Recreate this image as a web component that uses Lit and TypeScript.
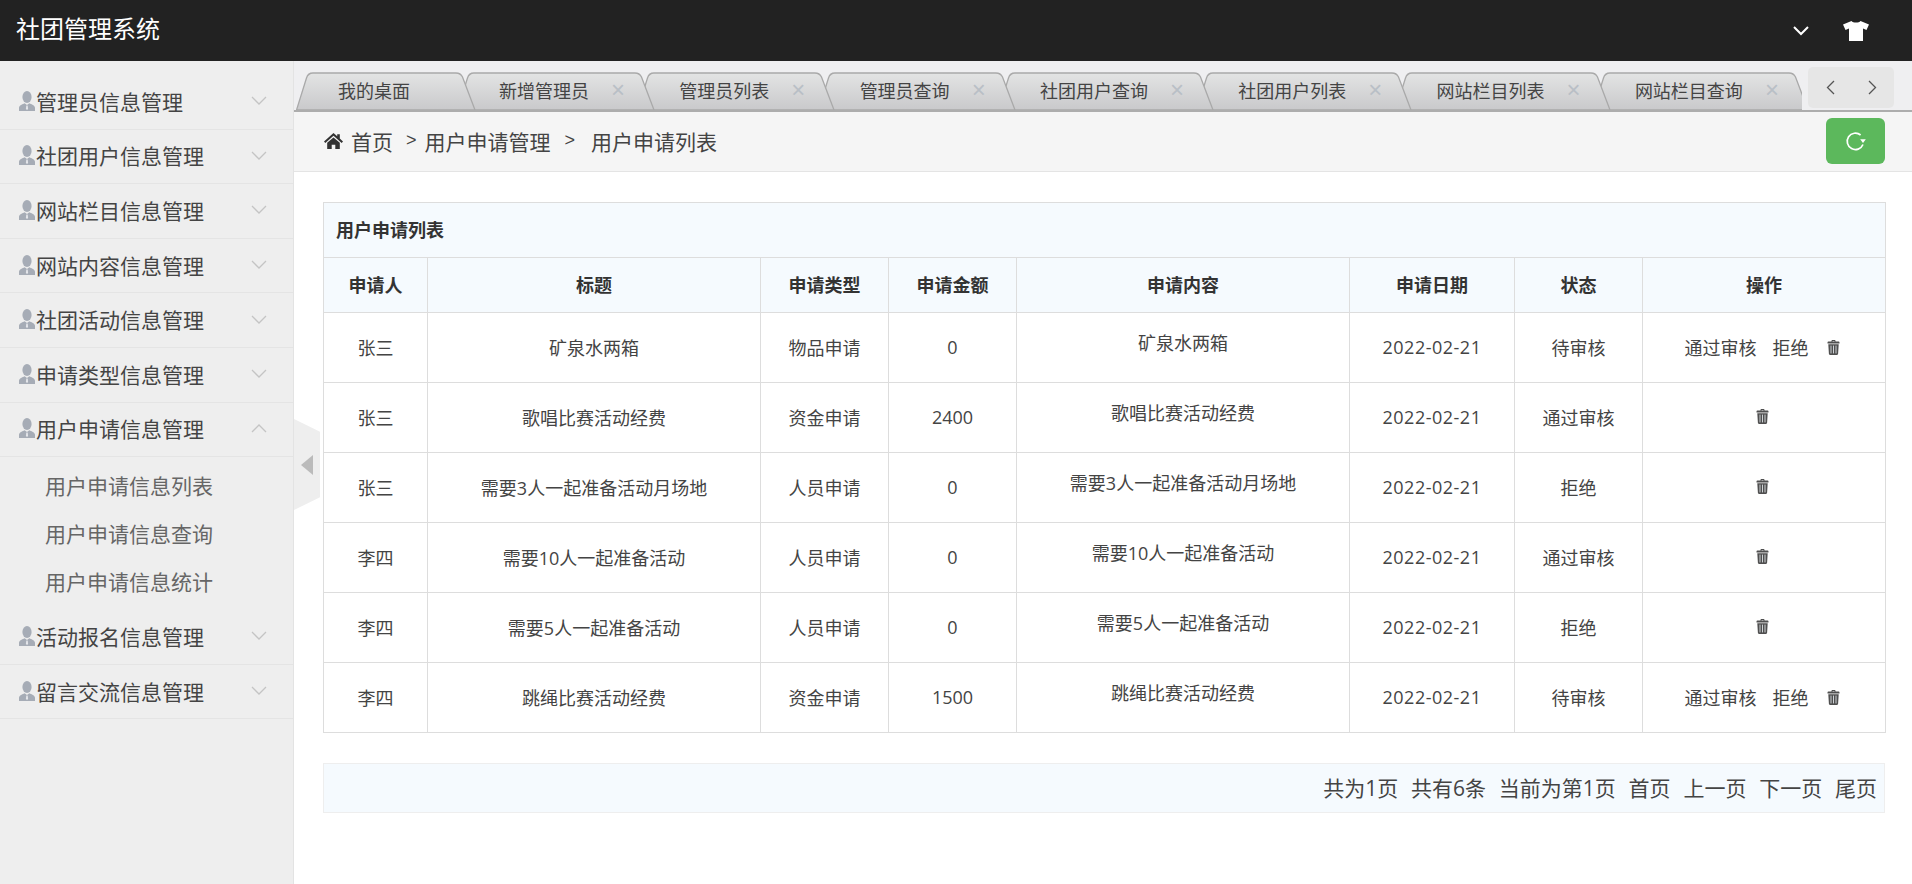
import { LitElement, html, css, svg } from "lit";
import { customElement } from "lit/decorators.js";

const userIcon = html`<svg class="user" viewBox="0 0 16 20"><ellipse cx="8" cy="6" rx="4.6" ry="6" fill="#a6acb6"></ellipse><path d="M0 20v-3.2c0-2.6 3.6-3.6 5.6-4.6L8 14l2.4-1.8c2 1 5.6 2 5.6 4.6V20z" fill="#a6acb6"></path><path d="M7.3 14.5h1.4l.4 3.5-1.1 1-1.1-1z" fill="#e4e6ea"></path></svg>`;
const chevDown = html`<svg class="chev" viewBox="0 0 16 9"><path d="M1 1l7 7 7-7" fill="none" stroke="#c4c4c4" stroke-width="1.3"></path></svg>`;
const chevUp = html`<svg class="chev" viewBox="0 0 16 9"><path d="M1 8l7-7 7 7" fill="none" stroke="#c4c4c4" stroke-width="1.3"></path></svg>`;
const trash = html`<svg class="trash" viewBox="0 0 13 15"><path d="M4.5 1.6V.9C4.5.4 5 0 5.4 0h2.2c.4 0 .9.4.9.9v.7h3.1c.5 0 .9.4.9.9v1H.5v-1c0-.5.4-.9.9-.9zm1-.6v.6h2V1z" fill="#4f4f4f"></path><path d="M1.3 4.2h10.4l-.6 9.6c0 .7-.5 1.2-1.2 1.2H3.1c-.7 0-1.2-.5-1.2-1.2z" fill="#4f4f4f"></path><path d="M4 5.6v7.8M6.5 5.6v7.8M9 5.6v7.8" stroke="#cfd3d6" stroke-width="1"></path></svg>`;

interface Tab { t: string; close: boolean; }
const tabs: Tab[] = [
  { t: "我的桌面", close: false },
  { t: "新增管理员", close: true },
  { t: "管理员列表", close: true },
  { t: "管理员查询", close: true },
  { t: "社团用户查询", close: true },
  { t: "社团用户列表", close: true },
  { t: "网站栏目列表", close: true },
  { t: "网站栏目查询", close: true },
];

const menus = ["管理员信息管理", "社团用户信息管理", "网站栏目信息管理", "网站内容信息管理", "社团活动信息管理", "申请类型信息管理", "用户申请信息管理", "活动报名信息管理", "留言交流信息管理"];
const subs = ["用户申请信息列表", "用户申请信息查询", "用户申请信息统计"];
const heads = ["申请人", "标题", "申请类型", "申请金额", "申请内容", "申请日期", "状态", "操作"];
const rows = [
  ["张三", "矿泉水两箱", "物品申请", "0", "2022-02-21", "待审核"],
  ["张三", "歌唱比赛活动经费", "资金申请", "2400", "2022-02-21", "通过审核"],
  ["张三", "需要3人一起准备活动月场地", "人员申请", "0", "2022-02-21", "拒绝"],
  ["李四", "需要10人一起准备活动", "人员申请", "0", "2022-02-21", "通过审核"],
  ["李四", "需要5人一起准备活动", "人员申请", "0", "2022-02-21", "拒绝"],
  ["李四", "跳绳比赛活动经费", "资金申请", "1500", "2022-02-21", "待审核"],
];

@customElement("app-root")
export class AppRoot extends LitElement {
  static styles = css`
    :host { display: block; height: 884px; overflow: hidden; background: #fff; color: #333; font-family: "Open Sans", "Noto Sans CJK SC", "Liberation Sans", sans-serif; }
    * { box-sizing: border-box; }
    .top { height: 61px; background: #222; color: #fff; display: flex; align-items: center; padding: 0 0 6px 16px; font-size: 24px; }
    .top .brand { flex: 1; }
    .top .down { width: 18px; height: 11px; margin-right: 33px; margin-top: 6px; }
    .top .shirt { width: 26px; height: 20px; margin-right: 43px; margin-top: 6px; }
    .body { display: flex; height: 823px; }
    .side { width: 294px; flex: none; background: #eee; border-right: 1px solid #e3e3e3; padding-top: 14px; position: relative; font-size: 21px; }
    .item { height: 54.6px; display: flex; align-items: center; padding: 0 0 2px 19px; border-bottom: 1px solid #e4e4e4; color: #444; }
    .item .label { margin-left: 1px; flex: 1; white-space: nowrap; }
    .user { width: 16px; height: 20px; flex: none; }
    .chev { width: 16px; height: 9px; flex: none; margin-right: 26px; }
    .subs { padding: 4px 0 5px; }
    .sub { height: 48px; display: flex; align-items: center; padding-left: 45px; color: #666; white-space: nowrap; }
    .handle { position: absolute; left: 294px; top: 358px; width: 26px; height: 91px; background: #eee; clip-path: polygon(0 0, 100% 14%, 100% 86%, 0 100%); z-index: 2; }
    .handle i { position: absolute; left: 7px; top: 36px; width: 0; height: 0; border-style: solid; border-width: 10px 12px 10px 0; border-color: transparent #bbb transparent transparent; }
    .main { flex: 1; min-width: 0; display: flex; flex-direction: column; }
    .tabbar { height: 51px; flex: none; background: #efeff1; border-bottom: 2px solid #adadad; display: flex; align-items: flex-start; }
    .scroller { width: 1508px; height: 49px; flex: none; overflow: hidden; display: flex; align-items: flex-end; padding-left: 2px; }
    .tab { position: relative; flex: none; height: 38px; display: flex; align-items: center; padding: 0 30px 3px 42px; margin-right: -17.7px; font-size: 18px; color: #444; white-space: nowrap; }
    .tab.first { margin-right: -19px; }
    .tab svg.shape { position: absolute; left: 0; top: 0; width: 100%; height: 38px; }
    .tab span { position: relative; }
    .tab .x { width: 14px; margin-left: 22px; color: #b9bfc6; font-family: "Liberation Sans", sans-serif; font-size: 24px; text-align: center; line-height: 24px; }
    .nav { width: 86px; height: 41px; margin: 6px 0 0 6px; flex: none; background: #e6e6e6; border-radius: 5px; display: flex; align-items: center; justify-content: center; gap: 33px; }
    .nav svg { width: 9px; height: 15px; }
    .crumb { height: 60px; flex: none; background: #f5f5f5; border-bottom: 1px solid #e4e4e4; display: flex; align-items: center; padding: 0 27px 2px 30px; font-size: 21px; color: #444; white-space: nowrap; }
    .crumb .home { width: 19px; height: 16px; margin-right: 8px; }
    .crumb .sep { margin: 0 8px 0 13px; font-size: 18px; font-family: "Liberation Sans", sans-serif; }
    .crumb .sep.wide { margin: 0 16px 0 14px; }
    .crumb .grow { flex: 1; }
    .refresh { width: 59px; height: 46px; background: #5cb85c; border-radius: 6px; display: flex; align-items: center; justify-content: center; }
    .refresh svg { width: 22px; height: 22px; }
    .content { padding: 30px 27px 0 29px; }
    table { width: 1562px; border-collapse: collapse; table-layout: fixed; font-size: 18px; color: #444; }
    td, th { border: 1px solid #ddd; text-align: center; padding: 0 0 2px; vertical-align: middle; }
    th { background: #f5fafe; font-weight: 700; color: #333; height: 55px; }
    th.title { text-align: left; padding-left: 12px; }
    td { height: 70px; }
    td .up { display: block; padding-bottom: 10px; }
    td.date { letter-spacing: .5px; }
    .ops { display: inline-flex; align-items: center; gap: 16px; padding-right: 4px; }
    .ops .gapt { margin-right: 2px; }
    .trash { width: 13px; height: 15px; display: block; margin-top: 2px; }
    .pager { margin-top: 30px; width: 1562px; height: 50px; background: #f5fafe; border: 1px solid #eee; display: flex; align-items: center; justify-content: flex-end; gap: 12.8px; padding: 0 7px 2px 0; font-size: 21px; color: #444; white-space: nowrap; }
    .c1 { width: 104px; } .c2 { width: 333px; } .c3 { width: 128px; } .c4 { width: 128px; }
    .c5 { width: 333px; } .c6 { width: 165px; } .c7 { width: 128px; } .c8 { width: 243px; }
  `;

  private tabShape(w: number) {
    return svg`<svg class="shape" viewBox="0 0 ${w} 38" preserveAspectRatio="none"><defs><linearGradient id="g" x1="0" y1="0" x2="0" y2="1"><stop offset="0" stop-color="#e3e4e4"></stop><stop offset="1" stop-color="#c9c9cb"></stop></linearGradient></defs><path d="M.5 38L10.5 6Q12 1 17 1L${w - 20} 1Q${w - 15.5} 1 ${w - 13.5} 5L${w - 1} 38Z" fill="url(#g)" stroke="#a9a9a9" stroke-width="1.3"></path></svg>`;
  }

  private renderMenu(m: string, open: boolean) {
    return html`<div class="item">${userIcon}<span class="label">${m}</span>${open ? chevUp : chevDown}</div>`;
  }

  render() {
    return html`
      <div class="top">
        <div class="brand">社团管理系统</div>
        <svg class="down" viewBox="0 0 18 11"><path d="M2 2l7 7 7-7" fill="none" stroke="#fff" stroke-width="2"></path></svg>
        <svg class="shirt" viewBox="0 0 26 20"><path d="M8.5 0C10 2 16 2 17.5 0L26 3.5 23.5 9 20 7.5V20H6V7.5L2.5 9 0 3.5z" fill="#fff"></path></svg>
      </div>
      <div class="body">
        <aside class="side">
          ${menus.slice(0, 6).map((m) => this.renderMenu(m, false))}
          ${this.renderMenu(menus[6], true)}
          <div class="subs">${subs.map((s) => html`<div class="sub">${s}</div>`)}</div>
          ${this.renderMenu(menus[7], false)}
          ${this.renderMenu(menus[8], false)}
          <div class="handle"><i></i></div>
        </aside>
        <div class="main">
          <div class="tabbar">
            <div class="scroller">
              ${tabs.map((t, i) => {
                const w = t.t.length * 18 + 108;
                return html`<div class="tab ${i === 0 ? "first" : ""}" style="z-index:${20 - i}">${this.tabShape(w)}<span>${t.t}</span>${t.close ? html`<span class="x">×</span>` : html`<span class="x"></span>`}</div>`;
              })}
            </div>
            <div class="nav">
              <svg viewBox="0 0 9 15"><path d="M8 1L1.5 7.5 8 14" fill="none" stroke="#555" stroke-width="1.3"></path></svg>
              <svg viewBox="0 0 9 15"><path d="M1 1l6.5 6.5L1 14" fill="none" stroke="#555" stroke-width="1.3"></path></svg>
            </div>
          </div>
          <div class="crumb">
            <svg class="home" viewBox="0 0 19 16"><path d="M9.5 0l3.7 3.3V1.2h2.6v4.4L19 8.5l-1.3 1.4L9.5 2.8 1.3 9.9 0 8.5z" fill="#333"></path><path d="M9.5 4.4l6.3 5.4V16h-4.5v-4.2H7.7V16H3.2V9.8z" fill="#333"></path></svg>
            <span>首页</span><span class="sep">&gt;</span>
            <span>用户申请管理</span><span class="sep wide">&gt;</span>
            <span>用户申请列表</span>
            <span class="grow"></span>
            <div class="refresh"><svg viewBox="0 0 22 22"><path d="M15.6 5A8.2 8.2 0 1 0 18 14.5" fill="none" stroke="#fff" stroke-width="1.7"></path><path d="M15.2 9.2h5.6L18 13z" fill="#fff"></path></svg></div>
          </div>
          <div class="content">
            <table>
              <colgroup>${[1, 2, 3, 4, 5, 6, 7, 8].map((n) => html`<col class="c${n}" />`)}</colgroup>
              <thead>
                <tr><th class="title" colspan="8">用户申请列表</th></tr>
                <tr>${heads.map((h) => html`<th>${h}</th>`)}</tr>
              </thead>
              <tbody>
                ${rows.map((r) => html`<tr>
                  <td>${r[0]}</td><td>${r[1]}</td><td>${r[2]}</td><td>${r[3]}</td>
                  <td><span class="up">${r[1]}</span></td>
                  <td class="date">${r[4]}</td><td>${r[5]}</td>
                  <td><span class="ops">${r[5] === "待审核" ? html`<span>通过审核</span><span class="gapt">拒绝</span>` : ""}${trash}</span></td>
                </tr>`)}
              </tbody>
            </table>
            <div class="pager">
              <span>共为1页</span><span>共有6条</span><span>当前为第1页</span><span>首页</span><span>上一页</span><span>下一页</span><span>尾页</span>
            </div>
          </div>
        </div>
      </div>
    `;
  }
}
